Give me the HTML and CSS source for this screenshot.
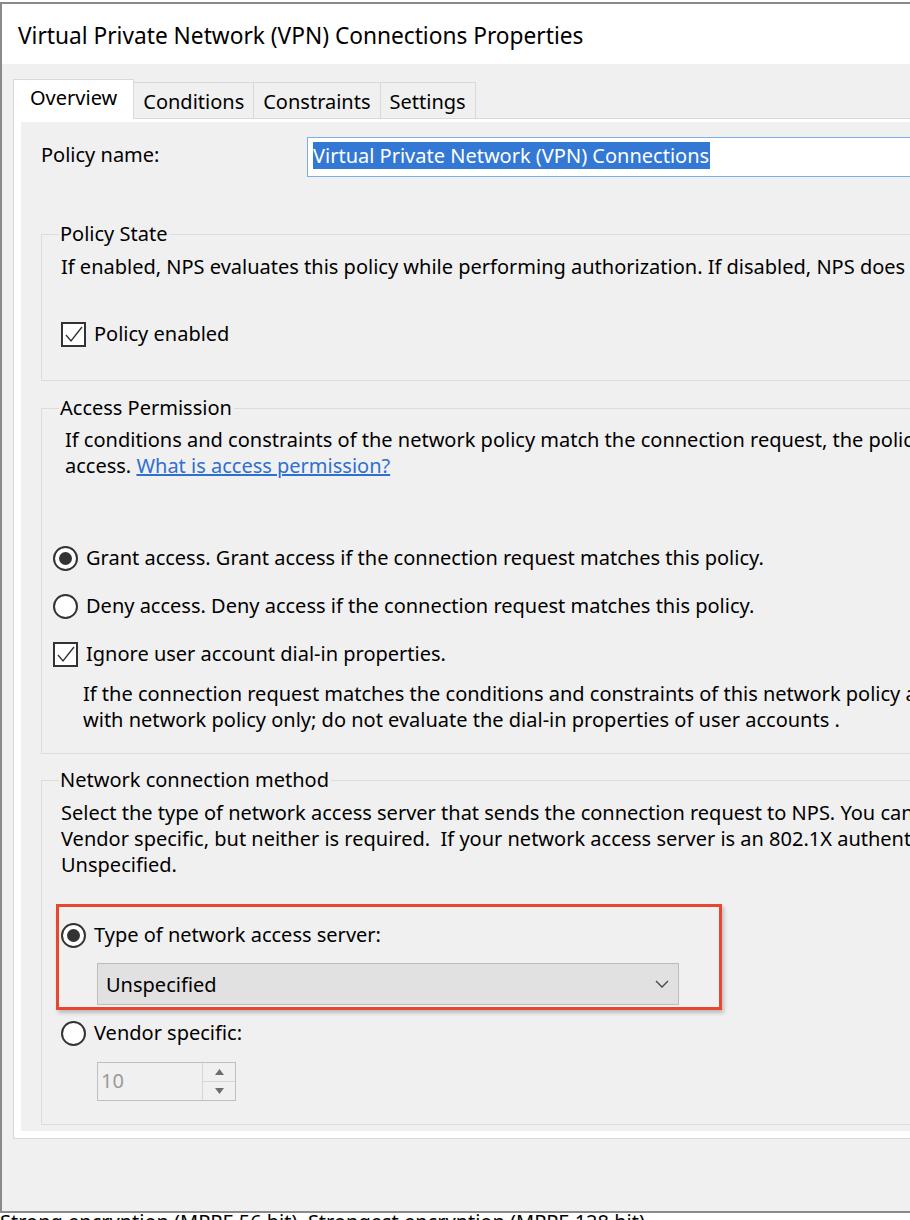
FILE: index.html
```html
<!doctype html>
<html lang="en">
	<head>
		<meta charset="utf-8">
		<title>Virtual Private Network (VPN) Connections Properties</title>
		<link rel="stylesheet" href="styles.css">
	</head>
	<body>
		<div class="window">
			<div class="titlebar">Virtual Private Network (VPN) Connections Properties</div>

			<div class="client">
				<div class="tabs">
					<div class="tab active">Overview</div>
					<div class="tab">Conditions</div>
					<div class="tab">Constraints</div>
					<div class="tab">Settings</div>
				</div>

				<div class="panel">
					<div class="page">
						<div class="nameRow">
							<label class="nameLabel">Policy name:</label>
							<div class="textbox"><span class="selection">Virtual Private Network (VPN) Connections</span></div>
						</div>

						<fieldset class="policyState">
							<legend>Policy State</legend>
							<p class="line first">If enabled, NPS evaluates this policy while performing authorization. If disabled, NPS does not evaluate this policy.</p>
							<div class="option enabledRow">
								<span class="checkbox">
									<svg width="21" height="21" viewBox="0 0 21 21"><polyline points="3,11 8,17 19,3" fill="none" stroke="#333" stroke-width="1.4"/></svg>
								</span>
								<span>Policy enabled</span>
							</div>
						</fieldset>

						<fieldset class="permission">
							<legend>Access Permission</legend>
							<p class="line first indent">If conditions and constraints of the network policy match the connection request, the policy can either grant access or deny</p>
							<p class="line indent">access. <a href="#" class="link">What is access permission?</a></p>

							<div class="option grantRow">
								<span class="radio checked"></span>
								<span>Grant access. Grant access if the connection request matches this policy.</span>
							</div>
							<div class="option denyRow">
								<span class="radio"></span>
								<span>Deny access. Deny access if the connection request matches this policy.</span>
							</div>
							<div class="option ignoreRow">
								<span class="checkbox">
									<svg width="21" height="21" viewBox="0 0 21 21"><polyline points="3,11 8,17 19,3" fill="none" stroke="#333" stroke-width="1.4"/></svg>
								</span>
								<span>Ignore user account dial-in properties.</span>
							</div>
							<p class="line ignoreText">If the connection request matches the conditions and constraints of this network policy and the policy grants access, perform authorization</p>
							<p class="line ignoreText">with network policy only; do not evaluate the dial-in properties of user accounts .</p>
						</fieldset>

						<fieldset class="method">
							<legend>Network connection method</legend>
							<p class="line first">Select the type of network access server that sends the connection request to NPS. You can select either the network access server type or</p>
							<p class="line">Vendor specific, but neither is required.&nbsp; If your network access server is an 802.1X authenticating switch or wireless access point, select</p>
							<p class="line">Unspecified.</p>

							<div class="highlight">
								<div class="option">
									<span class="radio checked"></span>
									<span>Type of network access server:</span>
								</div>
								<div class="combo">
									<span>Unspecified</span>
									<svg width="14" height="8" viewBox="0 0 14 8"><polyline points="1,1 7,7 13,1" fill="none" stroke="#444" stroke-width="1.3"/></svg>
								</div>
							</div>

							<div class="option vendorRow">
								<span class="radio"></span>
								<span>Vendor specific:</span>
							</div>
							<div class="spin">
								<span class="spinValue">10</span>
								<span class="spinButtons">
									<span class="spinUp"><svg width="9" height="6" viewBox="0 0 9 6"><polygon points="4.5,0 9,6 0,6" fill="#6d6d6d"/></svg></span>
									<span class="spinDown"><svg width="9" height="6" viewBox="0 0 9 6"><polygon points="0,0 9,0 4.5,6" fill="#6d6d6d"/></svg></span>
								</span>
							</div>
						</fieldset>
					</div>
				</div>
			</div>
		</div>

		<div class="behind">Strong encryption (MPPE 56 bit)&nbsp; Strongest encryption (MPPE 128 bit)</div>
	</body>
</html>
```

FILE: styles.css
```css
html, body {
	margin: 0;
	height: 1220px;
	overflow: hidden;
	background: #fff;
}

body {
	font-family: "Noto Sans", "Open Sans", sans-serif;
	font-size: 20px;
	color: #000;
}

.window {
	box-sizing: border-box;
	margin-top: 2px;
	width: 1200px;
	height: 1211px;
	border: 2px solid #8a8a8a;
	border-right: 0;
	background: #f0f0f0;
}

.titlebar {
	height: 60px;
	line-height: 63px;
	padding-left: 16px;
	background: #fff;
	font-size: 22.7px;
	white-space: nowrap;
}

.client {
	padding: 15px 0 0 11px;
}

.tabs {
	position: relative;
	z-index: 1;
	display: flex;
	align-items: flex-end;
	height: 40px;
	margin-bottom: -1px;
}

.tab {
	box-sizing: border-box;
	height: 36px;
	line-height: 38px;
	margin-bottom: 1px;
	margin-left: -1px;
	padding: 0 9px;
	border: 1px solid #d9d9d9;
	border-bottom: 0;
	background: #f0f0f0;
	white-space: nowrap;
}

.tab.active {
	height: 40px;
	line-height: 36px;
	margin-bottom: 0;
	margin-left: 0;
	padding: 0 16px;
	background: #fff;
}

.panel {
	border: 1px solid #d9d9d9;
	border-right: 0;
	background: #fff;
	padding: 3px 0 7px 7px;
}

.page {
	background: #f0f0f0;
	padding: 15px 0 6px 20px;
}

.nameRow {
	display: flex;
	align-items: center;
	height: 40px;
}

.nameLabel {
	width: 266px;
	line-height: 36px;
	align-self: flex-start;
}

.textbox {
	box-sizing: border-box;
	flex: 1;
	height: 40px;
	padding: 4px 5px;
	border: 1px solid #7eaee6;
	background: #fff;
	line-height: 27px;
}

.selection {
	display: inline-block;
	background: #3278d4;
	color: #fff;
	padding-right: 1px;
}

fieldset {
	margin: 0;
	padding: 0;
	border: 1px solid #dcdcdc;
	border-right: 0;
	min-width: 0;
}

legend {
	margin-left: 17px;
	padding: 0 2px 0 1px;
	line-height: 26px;
}

.policyState {
	margin-top: 44px;
	padding-bottom: 33px;
}

.permission {
	margin-top: 14px;
	padding-bottom: 20px;
}

.method {
	margin-top: 13px;
	padding-bottom: 23px;
}

.line {
	margin: 0 0 0 19px;
	line-height: 26px;
	white-space: nowrap;
}

.line.first {
	margin-top: 7px;
}

.line.indent {
	margin-left: 23px;
}

.permission .line.first {
	margin-top: 6px;
}

.link {
	color: #2f6fcf;
	text-decoration: underline;
}

.ignoreText {
	margin-left: 41px;
}

.ignoreRow + .ignoreText {
	margin-top: 14px;
}

.option {
	display: flex;
	align-items: center;
	gap: 8px;
	height: 26px;
	line-height: 26px;
	white-space: nowrap;
}

.enabledRow {
	margin: 41px 0 0 19px;
}

.grantRow {
	margin: 66px 0 0 11px;
}

.denyRow {
	margin: 22px 0 0 11px;
}

.ignoreRow {
	margin: 22px 0 0 11px;
}

.checkbox {
	box-sizing: border-box;
	display: flex;
	align-items: center;
	justify-content: center;
	width: 25px;
	height: 25px;
	border: 2px solid #333;
	background: #fff;
}

.radio {
	box-sizing: border-box;
	display: flex;
	align-items: center;
	justify-content: center;
	width: 25px;
	height: 25px;
	border: 2px solid #333;
	border-radius: 50%;
	background: #fff;
}

.radio.checked::after {
	content: "";
	width: 13px;
	height: 13px;
	border-radius: 50%;
	background: #333;
}

.highlight {
	box-sizing: border-box;
	width: 666px;
	margin: 26px 0 0 14px;
	padding: 15px 0 2px 2px;
	border: 3px solid #e8472e;
	box-shadow: 2px 3px 4px rgba(0, 0, 0, 0.22);
}

.combo {
	box-sizing: border-box;
	display: flex;
	align-items: center;
	justify-content: space-between;
	width: 582px;
	height: 42px;
	margin: 15px 0 0 36px;
	padding: 0 9px 0 8px;
	border: 1px solid #bcbcbc;
	background: #e1e1e1;
}

.vendorRow {
	margin: 10px 0 0 19px;
}

.spin {
	box-sizing: border-box;
	display: flex;
	width: 139px;
	height: 39px;
	margin: 16px 0 0 55px;
	border: 1px solid #bfbfbf;
	background: #f0f0f0;
}

.spinValue {
	flex: 1;
	padding-left: 3px;
	line-height: 35px;
	color: #9a9a9a;
}

.spinButtons {
	display: flex;
	flex-direction: column;
	width: 32px;
	border-left: 1px solid #d6d6d6;
}

.spinUp, .spinDown {
	flex: 1;
	display: flex;
	align-items: center;
	justify-content: center;
}

.spinUp {
	border-bottom: 1px solid #d6d6d6;
}

.behind {
	line-height: 18px;
	white-space: nowrap;
}
```
